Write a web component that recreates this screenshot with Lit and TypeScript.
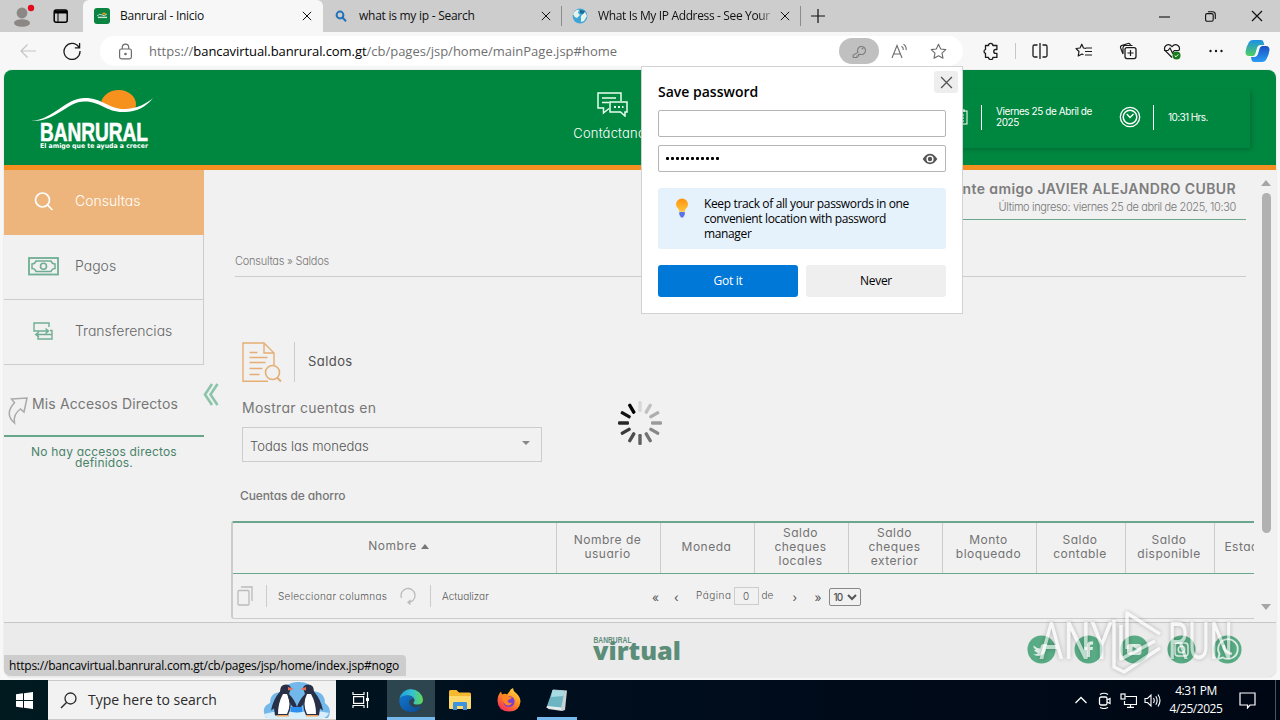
import {LitElement, html, svg, css} from 'lit';
import {customElement, property} from 'lit/decorators.js';
import {classMap} from 'lit/directives/class-map.js';

const icon = (size: number, body: unknown, box = 24) => html`
  <svg class="icon" width=${size} height=${size} viewBox="0 0 ${box} ${box}"
    fill="none" stroke="currentColor" stroke-width="1.5">${body}</svg>
`;

const cross = (size: number) => icon(size, svg`<path d="M1 1L11 11M11 1L1 11" stroke-width="1.2"/>`, 12);

const shared = css`
  * {
    box-sizing: border-box;
  }
  svg {
    display: block;
    flex: none;
  }
`;

@customElement('browser-tabs')
export class BrowserTabs extends LitElement {
  static styles = [
    shared,
    css`
      :host {
        display: flex;
        height: 32px;
        background: #cdcdcd;
        font: 12px/16px 'Open Sans', sans-serif;
        color: #111;
      }
      .profile {
        display: flex;
        align-items: center;
        width: 83px;
        padding-left: 13px;
        gap: 16px;
        border-radius: 0 0 6px 0;
      }
      .tab {
        display: flex;
        align-items: center;
        width: 238px;
        padding: 0 10px;
      }
      .tab.active {
        width: 240px;
        padding: 0 11px;
        background: #f7f7f7;
        border-radius: 6px 6px 0 0;
      }
      .tab.last {
        width: 240px;
        border-left: 1px solid #8c8c8c;
        border-right: 1px solid #8c8c8c;
        height: 20px;
        margin-top: 6px;
      }
      .favicon {
        width: 16px;
        margin-right: 10px;
      }
      .label {
        flex: 1;
        letter-spacing: -0.26px;
        white-space: nowrap;
        overflow: hidden;
      }
      .last .label {
        letter-spacing: -0.35px;
        margin-right: 4px;
        -webkit-mask-image: linear-gradient(90deg, #000 90%, transparent);
        mask-image: linear-gradient(90deg, #000 90%, transparent);
      }
      .new-tab {
        display: flex;
        align-items: center;
        margin-left: 10px;
      }
      .window {
        display: flex;
        align-items: center;
        margin-left: auto;
        gap: 35px;
        padding-right: 17px;
      }
    `,
  ];

  render() {
    return html`
      <div class="profile">
        <svg width="24" height="24" viewBox="0 0 24 24">
          <circle cx="9" cy="9" r="5.4" fill="#8b8785" />
          <ellipse cx="9" cy="19" rx="8" ry="3.8" fill="#8b8785" />
          <circle cx="18" cy="4" r="3.2" fill="#e00b1c" />
        </svg>
        <svg width="16" height="16" viewBox="0 0 16 16" fill="none" stroke="#000">
          <rect x="1.2" y="2" width="13" height="12.2" rx="2" stroke-width="1.5" />
          <path d="M2 4h12" stroke-width="3" /><path d="M5 4v10" />
        </svg>
      </div>
      <div class="tab active">
        <svg class="favicon" height="16" viewBox="0 0 16 16">
          <rect width="16" height="16" rx="3" fill="#0a8440" />
          <path d="M8 6.5a2 2 0 0 1 4 0" fill="#f7941d" />
          <path d="M3 8q3-3 5-1t5-1" stroke="#fff" stroke-width=".7" fill="none" />
          <path d="M4 9.4h9" stroke="#fff" stroke-width="1.4" opacity=".8" />
        </svg>
        <span class="label">Banrural - Inicio</span>${cross(10)}
      </div>
      <div class="tab">
        <svg class="favicon" height="16" viewBox="0 0 16 16" fill="none" stroke="#2271b9" stroke-width="2">
          <circle cx="7" cy="7" r="3.4" /><path d="M9.5 9.5L13 13.3" />
        </svg>
        <span class="label">what is my ip - Search</span>${cross(10)}
      </div>
      <div class="tab last">
        <svg class="favicon" height="16" viewBox="0 0 16 16">
          <circle cx="8" cy="8" r="7.4" fill="#3fa4d6" />
          <path d="M1 6q3-5 6-4l-1 3 2 2-3 3q-3-1-4-4zM9 8l4-4 2 4-3 5-3 1z" fill="#e6f3e9" />
          <path d="M8 2l5 1-2 3-3-1z" fill="#1c6a94" />
        </svg>
        <span class="label">What Is My IP Address - See Your</span>${cross(10)}
      </div>
      <div class="new-tab">${icon(14, svg`<path d="M7 0v14M0 7h14" stroke-width="1.2"/>`, 14)}</div>
      <div class="window">
        ${icon(11, svg`<path d="M0 6h11" stroke-width="1.1"/>`, 11)}
        ${icon(
          11,
          svg`<rect x=".6" y="2.6" width="7.6" height="7.6" rx="1.5" stroke-width="1.1"/>
            <path d="M3 .7h4.6a2.7 2.7 0 0 1 2.7 2.7V8" stroke-width="1.1"/>`,
          11
        )}
        ${cross(12)}
      </div>
    `;
  }
}

@customElement('address-bar')
export class AddressBar extends LitElement {
  static styles = [
    shared,
    css`
      :host {
        display: flex;
        align-items: center;
        height: 38px;
        padding: 0 10px 0 19px;
        background: #f7f7f7;
        color: #1b1b1b;
      }
      .back {
        color: #c3c3c3;
        margin-right: 26px;
      }
      .pill {
        display: flex;
        align-items: center;
        width: 863px;
        height: 30px;
        margin-left: 19px;
        padding: 0 16px 0 17px;
        border-radius: 15px;
        background: #fff;
        color: #6b6b6b;
      }
      .url {
        flex: 1;
        margin-left: 15px;
        font: 13px/18px 'Open Sans', sans-serif;
        color: #6f6f6f;
        white-space: nowrap;
      }
      .host {
        color: #000;
        letter-spacing: -0.07px;
      }
      .key {
        display: flex;
        align-items: center;
        justify-content: center;
        width: 40px;
        height: 26px;
        border-radius: 13px;
        background: #c0c0c0;
        color: #7c7c7c;
      }
      .read {
        margin: 0 22px 0 12px;
      }
      .tools {
        display: flex;
        align-items: center;
        margin-left: 19px;
        gap: 26px;
      }
      .rule {
        width: 1px;
        height: 16px;
        margin: 0 -11px 0 -11px;
        background: #c6c6c6;
      }
      .copilot {
        margin-left: auto;
      }
    `,
  ];

  render() {
    return html`
      <div class="back">${icon(18, svg`<path d="M17 9H2M8.500 2.500L2 9l6.500 6.500" stroke-width="1.200"/>`, 18)}</div>
      ${icon(18, svg`<path d="M15.800 5.200A8 8 0 1 0 17 9M16.600 1v4.800h-4.800" stroke-width="1.300"/>`, 18)}
      <div class="pill">
        ${icon(
          17,
          svg`<rect x="2.600" y="6" width="11.800" height="9.800" rx="1.800" stroke-width="1.200"/>
            <path d="M5.300 6V4.300a3.200 3.200 0 0 1 6.400 0V6" stroke-width="1.200"/>
            <circle cx="8.500" cy="11" r=".6" fill="currentColor"/>`,
          17
        )}
        <div class="url">https://<span class="host">bancavirtual.banrural.com.gt</span>/cb/pages/jsp/home/mainPage.jsp#home</div>
        <div class="key">
          ${icon(
            15,
            svg`<path d="M6 8.400A4 4 0 1 1 8 10.200L6.600 10.500V12H5v1.500H1.200V11z" stroke-width="1.100"/>
              <circle cx="10.500" cy="4.600" r=".9" fill="currentColor" stroke="none"/>`,
            15
          )}
        </div>
        <div class="read">
          ${icon(
            17,
            svg`<path d="M1 15L6 2.500 11 15M2.700 11h6.600M10.500 3.200q2 1.200 1.800 3.800M12.500 1.200q3.200 2 2.600 6" stroke-width="1.100"/>`,
            17
          )}
        </div>
        ${icon(
          17,
          svg`<path d="M8.500 1.300l2.200 4.700 5.100.6-3.800 3.500 1 5.100-4.500-2.500L4 15.200l1-5.100L1.200 6.600 6.300 6z" stroke-width="1.100" stroke-linejoin="round"/>`,
          17
        )}
      </div>
      <div class="tools">
        ${icon(
          18,
          svg`<path d="M3.500 3.500h3a2.200 2.200 0 0 1 4.400 0h4v4h-1.200a1.900 1.900 0 0 0 0 3.900h1.200v4h-4a2.200 2.200 0 0 1-4.400 0h-3v-4a2.100 2.100 0 0 1 0-4z" stroke-width="1.300" stroke-linejoin="round"/>`,
          18
        )}
        <div class="rule"></div>
        ${icon(
          18,
          svg`<path d="M6.500 3H3.500a1.500 1.500 0 0 0-1.500 1.500v9A1.500 1.500 0 0 0 3.500 15h3M11.500 3h3A1.500 1.500 0 0 1 16 4.500v9a1.500 1.500 0 0 1-1.500 1.500h-3M9 1v16" stroke-width="1.300"/>`,
          18
        )}
        ${icon(
          18,
          svg`<path d="M11 6.400L8.500 6 6.800 2.200 5 6l-4 .5 3 3-.8 4.500 3.800-2 1.500.8M11 6h6M10 9.500h7M10 13h7" stroke-width="1.200" stroke-linejoin="round"/>`,
          18
        )}
        ${icon(
          18,
          svg`<rect x="6" y="5.600" width="11" height="11" rx="2" stroke-width="1.300"/>
            <path d="M4 12L1.500 5.600q-.3-1.400 1-2L9 1.500q1.600-.4 2.500 1.500M4 12V5.500Q4.200 3.600 6 3.500h7.500M11.500 8v6M8.500 11h6" stroke-width="1.200"/>`,
          18
        )}
        ${icon(
          18,
          svg`<path d="M9 15.500L2 8.500Q.6 5.500 3 3.500 6.200 1.400 9 4.600 11.800 1.400 15 3.500q2.400 2 1 5M1 8.500h4L7 6l2.500 5L11.300 8.500H16" stroke-width="1.200"/>
            <circle cx="13.500" cy="13.500" r="4" fill="#177a1b" stroke="none"/>
            <path d="M11.700 13.600l1.300 1.200 2.300-2.400" stroke="#fff" stroke-width="1"/>`,
          18
        )}
        ${icon(
          18,
          svg`<g fill="currentColor" stroke="none"><circle cx="3.500" cy="9" r="1.200"/><circle cx="9" cy="9" r="1.200"/><circle cx="14.500" cy="9" r="1.200"/></g>`,
          18
        )}
      </div>
      <svg class="copilot" width="25" height="24" viewBox="0 0 25 24">
        <defs>
          <linearGradient id="l" x2="0" y2="1"><stop stop-color="#1d8fe8" /><stop offset="1" stop-color="#4fd05e" /></linearGradient>
          <linearGradient id="r" x2="0" y2="1"><stop stop-color="#1b4fc4" /><stop offset="1" stop-color="#2a9df4" /></linearGradient>
        </defs>
        <path d="M8 1h8q2 0 2.500 2l.8 3h-4q-2 0-2.600 2l-2 7q-.6 2-2.700 2H4q-3.500 0-3.500-4 .5-5 3.500-10Q5.200 1 8 1z" fill="url(#l)" />
        <path d="M17 23H9q-2 0-2.500-2L6 18h3.500q2 0 2.600-2l2-7q.6-2 2.700-2H21q3.500 0 3.500 4-.5 5-3.500 10-1.200 2-4 2z" fill="url(#r)" />
        <path d="M14 7h3q-1.800.5-2.300 2.300L13 15q-.6 2-2.700 2.200H8q1.800-.7 2.300-2.300L12 9q.5-1.800 2-2z" fill="#f4fbff" />
      </svg>
    `;
  }
}

@customElement('bank-header')
export class BankHeader extends LitElement {
  static styles = [
    shared,
    css`
      :host {
        display: flex;
        height: 100px;
        padding: 19px 26px 0 27px;
        background: #00873f;
        border-bottom: 5px solid #f39021;
        color: #fff;
        font-family: Inter, sans-serif;
        font-feature-settings: 'cv11';
      }
      .contact {
        display: flex;
        flex-direction: column;
        align-items: center;
        gap: 7px;
        width: 82px;
        margin: 2px 0 0 auto;
        padding-top: 1px;
        font-size: 13px;
        line-height: 18px;
        letter-spacing: 0.2px;
        font-weight: 300;
      }
      .clock {
        display: flex;
        align-items: center;
        width: 320px;
        height: 59px;
        margin: 0 0 0 276px;
        padding: 0 0 3px 22px;
        box-shadow: 2px 2px 4px rgba(0, 0, 0, 0.18);
        font-size: 10px;
        line-height: 11px;
      }
      .date,
      .time {
        border-left: 1px solid #fff;
        padding-left: 14px;
        margin-left: 13px;
        height: 25px;
        display: flex;
        align-items: center;
      }
      .date {
        width: 138px;
        padding-right: 22px;
        letter-spacing: -0.42px;
      }
      .time {
        margin-left: 12px;
        letter-spacing: -0.6px;
      }
    `,
  ];

  render() {
    return html`
      <svg width="123" height="64" viewBox="0 0 123 64">
        <path d="M70 15a17.500 14.500 0 0 1 35 1l-1 4Q88 24 70 15z" fill="#f7911e" />
        <path d="M0 32C24 30 34 9 54 9c18 0 24 12 41 11 12-1 20-5 27-11-7 9-17 14-28 14C76 24 70 12.500 54 12.500 36 12 26 33 0 32z" fill="#fff" />
        <text x="9" y="52" textLength="108" lengthAdjust="spacingAndGlyphs" font-family="Liberation Sans" font-weight="700" font-size="26" fill="#fff" stroke="#fff" stroke-width=".6">BANRURAL</text>
        <text x="9" y="59" textLength="108" lengthAdjust="spacingAndGlyphs" font-family="DejaVu Sans" font-weight="700" font-size="6.500" fill="#fff">El amigo que te ayuda a crecer</text>
      </svg>
      <div class="contact">
        <svg width="32" height="25" viewBox="0 0 32 25" fill="none" stroke="#e9fff2" stroke-width="1.500">
          <path d="M12 16.500L6.500 21v-5H1V1h23v8" /><path d="M5 6h14M5 10.500h7" />
          <path d="M13 10h17v10h-2v4l-4.500-4H13z" />
          <path d="M17 15h2M21 15h2M25 15h1.500" stroke-width="2" />
        </svg>
        Contáctanos
      </div>
      <div class="clock">
        <svg width="16" height="16" viewBox="0 0 16 16" fill="none" stroke="#fff">
          <rect x="1" y="2" width="14" height="13" /><path d="M4 6h8M4 9h8M4 12h8M4 0v3M12 0v3" />
        </svg>
        <div class="date">Viernes 25 de Abril de 2025</div>
        <svg width="22" height="22" viewBox="0 0 22 22" fill="none" stroke="#fff">
          <circle cx="11" cy="11" r="9.700" stroke-width="1.300" />
          <circle cx="11" cy="11" r="6.800" stroke-width="1.500" />
          <path d="M7.800 8L11 11.500 14.500 8" stroke-width="1.400" />
        </svg>
        <div class="time">10:31 Hrs.</div>
      </div>
    `;
  }
}

const menuIcons = [
  svg`<circle cx="14.500" cy="15" r="7" stroke-width="1.700"/><path d="M19.500 20l5 5" stroke-width="1.700"/>`,
  svg`<g transform="translate(0 7)"><rect x="1" y="1" width="29" height="16.500" stroke-width="1.800"/>
    <path d="M8 4h15q1 3 4 3v4.500q-3 0-4 3H8q-1-3-4-3V7q3 0 4-3z" stroke-width="1.500"/>
    <circle cx="15.500" cy="9.200" r="3" stroke-width="1.600"/></g>`,
  svg`<path d="M21 12V8H6v8h14M17.500 13.500l3 2.500-3 2.500M10 19.500v4.500h14v-8.500h-2M24 19.500H7.500M11 17l-3.300 2.500L11 22" stroke-width="1.400"/>`,
];

@customElement('side-menu')
export class SideMenu extends LitElement {
  static styles = [
    shared,
    css`
      :host {
        display: block;
        width: 200px;
        font-family: Inter, sans-serif;
        font-feature-settings: 'cv11';
        color: #777;
      }
      .item {
        display: flex;
        align-items: center;
        height: 65px;
        padding: 0 0 3px 24px;
        border-right: 1px solid #ccc;
        border-bottom: 1px solid #ccc;
        font-size: 14px;
        font-weight: 300;
        color: #666;
        gap: 16px;
      }
      .item svg {
        color: #6fae93;
      }
      .item.active {
        background: #edb57b;
        border-color: #edb57b;
        color: #fff;
      }
      .item.active svg {
        color: #fff;
      }
      .shortcuts {
        display: flex;
        height: 72px;
        padding: 30px 0 0 3px;
        border-bottom: 2px solid #66a68a;
        font-size: 14px;
        line-height: 18px;
        letter-spacing: 0.14px;
        white-space: nowrap;
        gap: 4px;
      }
      .shortcuts svg {
        margin-top: 2px;
      }
      .empty {
        margin: 9px 20px 0;
        text-align: center;
        font-size: 12px;
        line-height: 11px;
        letter-spacing: 0.2px;
        color: #49836a;
      }
    `,
  ];

  render() {
    return html`
      ${['Consultas', 'Pagos', 'Transferencias'].map(
        (name, i) => html`
          <div class=${classMap({item: true, active: i === 0})}>${icon(31, menuIcons[i], 31)}${name}</div>
        `
      )}
      <div class="shortcuts">
        <svg width="21" height="28" viewBox="0 0 21 28" fill="none" stroke="#aaa" stroke-width="1.500">
          <path d="M4.500 2L20 1l-3 14-3.500-3Q6 17 7.500 26-3 17 7.500 5.800z" />
        </svg>
        Mis Accesos Directos
      </div>
      <div class="empty">No hay accesos directos definidos.</div>
    `;
  }
}

@customElement('accounts-table')
export class AccountsTable extends LitElement {
  @property({attribute: false}) columns: {title: string; width: number}[] = [];

  static styles = [
    shared,
    css`
      :host {
        display: block;
        overflow: hidden;
        height: 98px;
        margin-left: -1px;
        border-left: 2px solid #ccc;
        border-top: 2px solid #6ba78c;
        border-bottom: 1px solid #ccc;
        border-radius: 3px 0 0 3px;
        color: #737373;
      }
      .head {
        display: flex;
        width: max-content;
        height: 51px;
        border-bottom: 1px solid #6ba78c;
      }
      .cell {
        display: flex;
        align-items: center;
        justify-content: center;
        padding: 0 2px 3px 0;
        border-right: 1px solid #ccc;
        font-size: 12px;
        line-height: 14px;
        letter-spacing: 0.5px;
        text-align: center;
        white-space: pre-line;
      }
      .cell:first-child {
        padding: 0 0 4px 8px;
      }
      .caret {
        width: 0;
        margin-left: 4px;
        border: 4px solid transparent;
        border-top: 0;
        border-bottom: 5px solid #777;
      }
      .tools {
        display: flex;
        align-items: center;
        height: 44px;
        padding-left: 4px;
        font-size: 10px;
        font-weight: 300;
        color: #555;
      }
      .rule {
        width: 1px;
        height: 22px;
        margin: 0 11px 0 13px;
        background: #ccc;
      }
      .pick {
        width: 122px;
        letter-spacing: 0.28px;
      }
      .refresh {
        width: 210px;
      }
      .nav {
        width: 22px;
        font-size: 12px;
        padding-top: 3px;
        font-weight: 400;
      }
      .page {
        letter-spacing: 0.5px;
        margin-right: 2px;
        padding-bottom: 2px;
      }
      .box {
        width: 25px;
        height: 18px;
        line-height: 16px;
        border: 1px solid #ccc;
        text-align: center;
        margin-right: 3px;
      }
      .of {
        width: 31px;
        padding-bottom: 2px;
      }
      .size {
        display: flex;
        align-items: center;
        justify-content: space-between;
        width: 32px;
        height: 18px;
        margin: 2px 0 0 -8px;
        padding: 0 3px 0 4px;
        border: 1px solid #888;
        border-radius: 2px;
        font-weight: 500;
        letter-spacing: -0.9px;
      }
    `,
  ];

  render() {
    return html`
      <div class="head">
        ${this.columns.map(
          (col, i) => html`
            <div class="cell" style="width:${col.width}px">${col.title}${i === 0 ? html`<i class="caret"></i>` : ''}</div>
          `
        )}
      </div>
      <div class="tools">
        <svg width="16" height="20" viewBox="0 0 16 20" fill="none" stroke="#bbb" stroke-width="1.300">
          <rect x="1" y="4.500" width="11" height="14.500" rx="1" /><path d="M4 1h11v14" />
        </svg>
        <div class="rule"></div>
        <div class="pick">Seleccionar columnas</div>
        <svg width="17" height="18" viewBox="0 0 17 18" fill="none" stroke="#bbb" stroke-width="1.300">
          <path d="M1.500 11A7 7 0 1 1 8 15.500M10.500 13L8 15.500l2.500 2" />
        </svg>
        <div class="rule"></div>
        <div class="refresh">Actualizar</div>
        <span class="nav">«</span>
        <span class="nav">‹</span>
        <span class="page">Página</span>
        <span class="box">0</span>
        <span class="of">de</span>
        <span class="nav">›</span>
        <span class="nav">»</span>
        <span class="size">10${icon(10, svg`<path d="M1 3l4 4 4-4" stroke-width="2"/>`, 10)}</span>
      </div>
    `;
  }
}

@customElement('balance-view')
export class BalanceView extends LitElement {
  columns = [
    {title: 'Nombre', width: 324},
    {title: 'Nombre de\nusuario', width: 104},
    {title: 'Moneda', width: 94},
    {title: 'Saldo\ncheques\nlocales', width: 94},
    {title: 'Saldo\ncheques\nexterior', width: 94},
    {title: 'Monto\nbloqueado', width: 94},
    {title: 'Saldo\ncontable', width: 89},
    {title: 'Saldo\ndisponible', width: 89},
    {title: 'Estado', width: 64},
  ];

  static styles = [
    shared,
    css`
      :host {
        display: flex;
        flex: 1;
        min-width: 0;
        font-family: Inter, sans-serif;
        font-feature-settings: 'cv11';
        color: #777;
      }
      .content {
        display: flex;
        flex-direction: column;
        width: 1022px;
        margin-left: 28px;
      }
      .welcome {
        width: 500px;
        height: 50px;
        margin: 0 8px 0 auto;
        padding: 11px 10px 0 0;
        border-bottom: 1px solid #6ba78c;
        text-align: right;
      }
      .user {
        font-size: 14px;
        line-height: 16px;
        font-weight: 600;
        letter-spacing: 0.38px;
        color: #7d7d7d;
      }
      .last {
        margin-top: 3px;
        font-size: 11px;
        line-height: 14px;
        font-weight: 300;
        letter-spacing: -0.36px;
      }
      .crumbs {
        margin: 34px 8px 0 3px;
        padding-bottom: 8px;
        border-bottom: 1px solid #ccc;
        font-size: 11px;
        line-height: 14px;
        font-weight: 300;
        letter-spacing: -0.25px;
      }
      .title {
        display: flex;
        height: 40px;
        margin: 65px 0 0 10px;
        line-height: 38px;
        font-size: 13px;
        letter-spacing: 0.43px;
        color: #505050;
      }
      .title span {
        margin-left: 12px;
        padding-left: 13px;
        border-left: 1px solid #ccc;
      }
      .label {
        margin: 18px 0 0 10px;
        font-size: 14px;
        line-height: 16px;
        letter-spacing: 0.27px;
      }
      .select {
        display: flex;
        align-items: center;
        justify-content: space-between;
        width: 300px;
        height: 35px;
        margin: 11px 0 0 10px;
        padding: 2px 11px 0 7px;
        border: 1px solid #ccc;
        font-size: 13px;
        font-weight: 300;
        color: #555;
      }
      .select i {
        margin-top: -6px;
        border: 4px solid transparent;
        border-top-color: #888;
        border-bottom: 0;
      }
      .section {
        margin: 27px 0 18px 8px;
        font-size: 12px;
        line-height: 14px;
        font-weight: 500;
        letter-spacing: -0.11px;
      }
      .scroll {
        display: flex;
        flex-direction: column;
        align-items: center;
        width: 18px;
        margin-left: 3px;
        padding: 10px 0 12px;
      }
      .up,
      .down {
        border: 5px solid transparent;
        border-top: 0;
        border-bottom: 6px solid #a5a5a5;
      }
      .down {
        margin-top: auto;
        transform: rotate(180deg);
      }
      .thumb {
        width: 9px;
        height: 340px;
        margin-top: 7px;
        border-radius: 5px;
        background: #b1b1b1;
      }
    `,
  ];

  render() {
    return html`
      <div class="content">
        <div class="welcome">
          <div class="user">Bienvenido cliente amigo JAVIER ALEJANDRO CUBUR</div>
          <div class="last">Último ingreso: viernes 25 de abril de 2025, 10:30</div>
        </div>
        <div class="crumbs">Consultas » Saldos</div>
        <div class="title">
          <svg width="40" height="40" viewBox="0 0 40 40" fill="none" stroke="#e5ae74" stroke-width="1.400">
            <path d="M26 39.300H1V1h21l10 10v12M22 1v10h10" />
            <path d="M7.500 10.500h8M7.500 15.500h18M7.500 20.500h16M7.500 26.500h13M7.500 32.500h10" />
            <circle cx="30.500" cy="30.500" r="7" stroke-width="1.600" /><path d="M35 35.500l4 4" stroke-width="2" />
          </svg>
          <span>Saldos</span>
        </div>
        <div class="label">Mostrar cuentas en</div>
        <div class="select">Todas las monedas<i></i></div>
        <div class="section">Cuentas de ahorro</div>
        <accounts-table .columns=${this.columns}></accounts-table>
      </div>
      <div class="scroll">
        <div class="up"></div>
        <div class="thumb"></div>
        <div class="down"></div>
      </div>
    `;
  }
}

const social = [
  svg`<path d="M6 19q4 1 5-1-3-1-4-3l2-.200Q6 13 6.500 10.500q3 3 7 3 0-5 4-4.500l3 .5-1.500 2.500Q19 20 12 21q-4 0-6-2z" fill="#dfeee6"/>`,
  svg`<path d="M13 22v-7h-2.500v-3H13v-2q0-3.500 3.500-3.500H19v3h-1.500q-1.500 0-1.500 1.500v1h3l-.5 3H16v7z" fill="#dfeee6"/>`,
  svg`<rect x="7" y="9" width="14.500" height="11" rx="3" fill="#dfeee6"/><path d="M12.500 11.500v6l5-3z" fill="#55a982"/>`,
  svg`<g fill="none" stroke="#dfeee6" stroke-width="1.500"><rect x="8" y="8" width="13" height="13" rx="3"/><circle cx="14.500" cy="14.500" r="3.200"/></g>`,
  svg`<g fill="none" stroke="#dfeee6"><path d="M5 24l1.500-5A9.800 9.800 0 1 1 10 22.500z" stroke-width="1.800"/><path d="M10.500 10q0 7 8.500 9" stroke-width="2.800"/></g>`,
];

@customElement('bank-footer')
export class BankFooter extends LitElement {
  static styles = [
    shared,
    css`
      :host {
        display: flex;
        align-items: center;
        height: 55px;
        padding: 0 34px 2px 588px;
        border-top: 1px solid #c6c6c6;
        background: #ebebeb;
      }
      .social {
        display: flex;
        margin-left: auto;
        gap: 17.5px;
      }
    `,
  ];

  render() {
    return html`
      <svg width="92" height="30" viewBox="0 0 92 30">
        <text x="1.500" y="9" textLength="38" lengthAdjust="spacingAndGlyphs" font-family="Liberation Sans" font-weight="700" font-size="8.500" fill="#5f8d7b">BANRURAL</text>
        <text x="1" y="26" textLength="88" lengthAdjust="spacingAndGlyphs" font-family="Open Sans" font-weight="800" font-size="25" fill="#5b8d79">virtual</text>
      </svg>
      <div class="social">
        ${social.map(
          (shape) => html`
            <svg width="29" height="29" viewBox="0 0 29 29"><circle cx="14.500" cy="14.500" r="14" fill="#58ab84" />${shape}</svg>
          `
        )}
      </div>
    `;
  }
}

@customElement('save-password')
export class SavePassword extends LitElement {
  static styles = [
    shared,
    css`
      :host {
        display: block;
        box-sizing: border-box;
        width: 322px;
        height: 248px;
        padding: 15px 16px 16px;
        border: 1px solid #d2d2d2;
        background: #fff;
        font: 12px/15px 'Open Sans', sans-serif;
        color: #000;
      }
      .title {
        height: 28px;
        line-height: 19px;
        font-size: 14px;
        font-weight: 600;
      }
      .close {
        position: absolute;
        top: 4px;
        right: 4px;
        display: flex;
        align-items: center;
        justify-content: center;
        width: 24px;
        height: 22px;
        border-radius: 3px;
        background: #eee;
        color: #555;
      }
      .field {
        display: flex;
        align-items: center;
        justify-content: space-between;
        height: 27px;
        margin-bottom: 8px;
        padding: 0 7px;
        border: 1px solid #b5b5b5;
        border-radius: 2px;
      }
      .dots {
        display: flex;
        gap: 2px;
      }
      .dots i {
        width: 3px;
        height: 3px;
        border-radius: 1px;
        background: #000;
      }
      .tip {
        display: flex;
        height: 61px;
        margin-top: 16px;
        padding: 8px 14px;
        gap: 11px;
        border-radius: 3px;
        background: #e5f1fb;
        letter-spacing: -0.36px;
      }
      .buttons {
        display: flex;
        gap: 8px;
        margin-top: 16px;
      }
      .button {
        flex: 1;
        line-height: 32px;
        border-radius: 3px;
        background: #efefef;
        text-align: center;
        letter-spacing: -0.3px;
      }
      .primary {
        background: #0078d7;
        color: #fff;
      }
    `,
  ];

  render() {
    return html`
      <div class="title">Save password</div>
      <div class="close">${cross(13)}</div>
      <div class="field"></div>
      <div class="field">
        <div class="dots">${Array.from({length: 11}, () => html`<i></i>`)}</div>
        <svg width="16" height="12" viewBox="0 0 16 12">
          <path d="M.7 6Q4 .8 8 .8T15.300 6Q12 11.200 8 11.200T.7 6z" fill="#555" />
          <circle cx="8" cy="6" r="3.600" fill="#fff" /><circle cx="8" cy="6" r="2.200" fill="#555" />
        </svg>
      </div>
      <div class="tip">
        <svg width="21" height="22" viewBox="0 0 21 22">
          <defs><linearGradient id="b" x2="0" y2="1"><stop stop-color="#ff9210" /><stop offset="1" stop-color="#ffc53a" /></linearGradient></defs>
          <path d="M10 2.500a6 6 0 0 1 6 6q0 2.500-2.500 4.500l-.8 2.800H7.400L6.500 13Q4 11 4 8.500a6 6 0 0 1 6-6z" fill="url(#b)" />
          <path d="M7.300 16h5.500v2.500l-1.700 3H9l-1.700-3z" fill="#5a74e8" />
        </svg>
        <div>Keep track of all your passwords in one convenient location with password manager</div>
      </div>
      <div class="buttons">
        <div class="button primary">Got it</div>
        <div class="button">Never</div>
      </div>
    `;
  }
}

@customElement('task-bar')
export class TaskBar extends LitElement {
  static styles = [
    shared,
    css`
      :host {
        display: flex;
        height: 40px;
        background: linear-gradient(90deg, #001a20, #000e1e 45%, #000714);
        color: #fff;
        font: 12px/18px 'Open Sans', sans-serif;
      }
      .start {
        display: flex;
        align-items: center;
        justify-content: center;
        width: 48px;
      }
      .search {
        display: flex;
        align-items: center;
        width: 288px;
        padding-left: 12px;
        gap: 11px;
        border: solid #c9c9c9;
        border-width: 1px 0;
        background: #f2f2f2;
        color: #2b2b2b;
        font-size: 14px;
      }
      .penguins {
        margin-left: auto;
        margin-right: 5px;
      }
      .app {
        display: flex;
        align-items: center;
        justify-content: center;
        width: 49px;
      }
      .app.active {
        width: 48px;
        padding-top: 3px;
        margin-left: 2px;
        background: #2d454e;
        border-bottom: 3px solid #76b9ed;
      }
      .app.open {
        width: 40px;
        margin-left: 4px;
        padding-top: 3px;
        border-bottom: 3px solid #76b9ed;
      }
      .tray {
        display: flex;
        align-items: center;
        margin-left: auto;
        padding-right: 19px;
        gap: 7px;
      }
      .clock {
        width: 60px;
        margin: 0 6px 0 -2px;
        text-align: center;
        letter-spacing: -0.45px;
      }
      .peek {
        width: 5px;
        border-left: 1px solid #4b5560;
      }
    `,
  ];

  render() {
    return html`
      <div class="start">
        <svg width="17" height="17" viewBox="0 0 17 17" fill="#fff"><path d="M0 2.300l7-1v6.800H0zM8 1.200L17 0v8H8zM0 9h7v6.800l-7-1zM8 9h9v8l-9-1.200z" /></svg>
      </div>
      <div class="search">
        ${icon(17, svg`<circle cx="10.500" cy="6.500" r="5.500" stroke-width="1.300"/><path d="M6.500 10.500L1 16" stroke-width="1.400"/>`, 17)}
        Type here to search
        <svg class="penguins" width="68" height="38" viewBox="0 0 68 38">
          <path d="M3 37Q-3 26 7 22q0-11 12-11Q24 0 36 1q12 0 14 9 12 1 12 12 8 6 3 15z" fill="#72b8ea" />
          <path d="M1 33q16-5 33-1 16-4 32 0-3 6-10 6H9q-7 0-8-5z" fill="#d8effb" />
          <path d="M23 3.500q-6 0-6 7-7 8-9 19l3-2 1 7h13Q30 24 26 13l2-6q-1-3.500-5-3.500z" fill="#283047" />
          <path d="M20 13q-5 9-5 20h9q5-10 0-20z" fill="#fff" />
          <path d="M25 12q7 7 9 14l-3 1q-6-5-6-15zM43 12q-7 7-9 14l3 1q6-5 6-15z" fill="#283047" />
          <path d="M45 3.500q6 0 6 7 7 8 9 19l-3-2-1 7H43Q38 24 42 13l-2-6q1-3.500 5-3.500z" fill="#283047" />
          <path d="M48 13q5 9 5 20h-9q-5-10 0-20z" fill="#fff" />
          <path d="M25 6l6 2-6 1.500zM43 6l-6 2 6 1.500z" fill="#ef6a4c" />
          <path d="M28 26h11v5H28z" fill="#2d8ff0" />
          <path d="M14 34h12v1.500H14zM43 34h12v1.500H43z" fill="#f2a45c" />
        </svg>
      </div>
      <div class="app">
        ${icon(18, svg`<path d="M1 1v2.500h11V1M1 17v-2.500h11V17M15.500 1v16" stroke-width="1.200"/><rect x="1.600" y="5.600" width="10" height="6.800" stroke-width="1.200"/><path d="M14 7h3v3h-3z" fill="#fff" stroke="none"/>`, 18)}
      </div>
      <div class="app active">
        <svg width="24" height="24" viewBox="0 0 24 24">
          <defs>
            <linearGradient id="e"><stop stop-color="#1b9de2" /><stop offset=".55" stop-color="#35c1d0" /><stop offset="1" stop-color="#65d84f" /></linearGradient>
            <linearGradient id="f" x2="1" y2="1"><stop stop-color="#1277cf" /><stop offset="1" stop-color="#0b4a94" /></linearGradient>
          </defs>
          <path d="M.3 11A12 12 0 0 1 24 11.500q0 5-5.500 5-4.500 0-4-2 1.500-1 1-3Q14 7.500 9 7.500q-6 0-8.700 3.500z" fill="url(#e)" />
          <path d="M.3 12Q2 7.500 8.500 7.500q4.500 0 6.500 3.500-3-1-4.500 1.500Q9 17 13.500 19q5 1.500 9-1.500-3.500 7-11 6.500Q.5 23 .3 12z" fill="url(#f)" />
        </svg>
      </div>
      <div class="app">
        <svg width="22" height="20" viewBox="0 0 22 20">
          <path d="M0 1.500Q0 0 1.500 0h6L10 2.500h10.500Q22 2.500 22 4v14H0z" fill="#f5b82e" />
          <path d="M0 6h22v12q0 1-1 1H1q-1 0-1-1z" fill="#ffd969" />
          <path d="M4 20v-7q0-1 1-1h12q1 0 1 1v7h-4v-4H8v4z" fill="#3d94dd" />
        </svg>
      </div>
      <div class="app">
        <svg width="24" height="24" viewBox="0 0 24 24">
          <defs><linearGradient id="x" x1=".9" x2=".2" y2="1"><stop stop-color="#ffe64a" /><stop offset=".5" stop-color="#ff8a1f" /><stop offset="1" stop-color="#f7265f" /></linearGradient></defs>
          <path d="M12.500 3.500Q13 1 16 0q0 3 3 5 4.500 4 4.500 8.500Q22.500 23.500 12 23.500.8 23 .5 13 .5 7 4 3.500l1 3q3-1.500 5 0z" fill="url(#x)" />
          <circle cx="12" cy="13.500" r="5.600" fill="#7a3fd0" />
          <path d="M5 8q4-2 7 .5 3 .5 2.500 2-3 1-4 2.500 1 3 5 1.500Q13 18.500 9 17 5 14 5 8z" fill="#ff8422" />
        </svg>
      </div>
      <div class="app open">
        <svg width="24" height="24" viewBox="0 0 24 24">
          <path d="M8 1.500l14 1-2 19.500-3 1L3 21z" fill="#c9d3d4" /><path d="M7.500 2l12 1L16 21 1.500 19.500z" fill="#6db5c3" />
          <path d="M7.500 2l12 1-1 5-12.500 1z" fill="#a8dbe2" /><path d="M2 18l14.500 1.500-.5 2.500L1.500 20z" fill="#e8eeee" />
        </svg>
      </div>
      <div class="tray">
        ${icon(16, svg`<path d="M2.500 11L8 5.500 13.500 11" stroke-width="1.300"/>`, 16)}
        ${icon(17, svg`<rect x="3.500" y="5" width="7.500" height="8" rx="1.500" stroke-width="1.300"/><path d="M11 8l3-1.500v5L11 10M4 2.500q4-2.500 8 0M4 15.500q4 2 8 0" stroke-width="1.200"/>`, 17)}
        ${icon(17, svg`<path d="M5.500 4.500h11v8H4.500V9M10.500 12.500V15M7 15.400h7" stroke-width="1.200"/><rect x="1" y="2" width="4" height="5" stroke-width="1.200"/>`, 17)}
        ${icon(17, svg`<path d="M1 6.500h2.500L7 3v11l-3.500-3.500H1zM9.500 6q1.500 2.500 0 5M11.800 4.300q2.700 4.200 0 8.400M14 2.500q4 6 0 12" stroke-width="1.100"/>`, 17)}
        <div class="clock">4:31 PM<br />4/25/2025</div>
        ${icon(17, svg`<path d="M1 1h15v12h-5L8.500 16V13H1z" stroke-width="1.200"/>`, 17)}
      </div>
      <div class="peek"></div>
    `;
  }
}

@customElement('app-root')
export class AppRoot extends LitElement {
  static styles = [
    shared,
    css`
      :host {
        position: relative;
        display: flex;
        flex-direction: column;
        width: 1280px;
        height: 720px;
        overflow: hidden;
        background: #f7f7f7;
      }
      .page {
        display: flex;
        flex-direction: column;
        height: 607px;
        margin: 0 4px 3px;
        border-radius: 8px;
        overflow: hidden;
        background: #f1f1f1;
        box-shadow: 0 0 1px #999;
      }
      .body {
        display: flex;
        flex: 1;
        min-height: 0;
      }
      save-password {
        position: absolute;
        left: 641px;
        top: 66px;
      }
      .collapse {
        position: absolute;
        left: 203px;
        top: 383px;
      }
      .spinner {
        position: absolute;
        left: 617px;
        top: 400px;
      }
      .status {
        position: absolute;
        left: 4px;
        top: 655px;
        height: 21px;
        width: 402px;
        padding-left: 5px;
        border-radius: 0 4px 0 7px;
        background: #cdcdcd;
        font: 12px/21px 'Open Sans', sans-serif;
        letter-spacing: -0.22px;
        white-space: nowrap;
      }
      .watermark {
        position: absolute;
        left: 1030px;
        top: 603px;
        opacity: 0.6;
        filter: drop-shadow(0 0 2px rgba(0, 0, 0, 0.4));
      }
    `,
  ];

  render() {
    return html`
      <browser-tabs></browser-tabs>
      <address-bar></address-bar>
      <div class="page">
        <bank-header></bank-header>
        <div class="body">
          <side-menu></side-menu>
          <balance-view></balance-view>
        </div>
        <bank-footer></bank-footer>
      </div>
      <task-bar></task-bar>
      <svg class="collapse" width="16" height="23" viewBox="0 0 16 23" fill="none" stroke="#8cc4aa" stroke-width="2.600">
        <path d="M9 1L2 11.500 9 22M14.500 1L7.500 11.500 14.500 22" />
      </svg>
      <svg class="spinner" width="46" height="46" viewBox="0 0 46 46">
        ${Array.from(
          {length: 12},
          (_, i) => svg`<rect x="21.300" y="1" width="3.400" height="11" rx="1.200" transform="rotate(${i * 30} 23 23)"
            fill="#000" opacity=${i === 0 ? 0.1 : 0.12 + 0.08 * i}/>`
        )}
      </svg>
      <div class="status">https://bancavirtual.banrural.com.gt/cb/pages/jsp/home/index.jsp#nogo</div>
      <svg class="watermark" width="210" height="72" viewBox="0 0 210 72">
        <g font-family="Roboto" font-size="51" font-weight="400" fill="#fff">
          <text x="9" y="56" textLength="74" lengthAdjust="spacingAndGlyphs">ANY</text>
          <text x="138" y="56" textLength="65" lengthAdjust="spacingAndGlyphs">RUN</text>
        </g>
        <path d="M97 46V10l33 21M84 17v47l10 5 36-24M91 22v34l34-18" fill="none" stroke="#fff" stroke-width="3.500" stroke-linejoin="round" />
      </svg>
      <save-password></save-password>
    `;
  }
}
